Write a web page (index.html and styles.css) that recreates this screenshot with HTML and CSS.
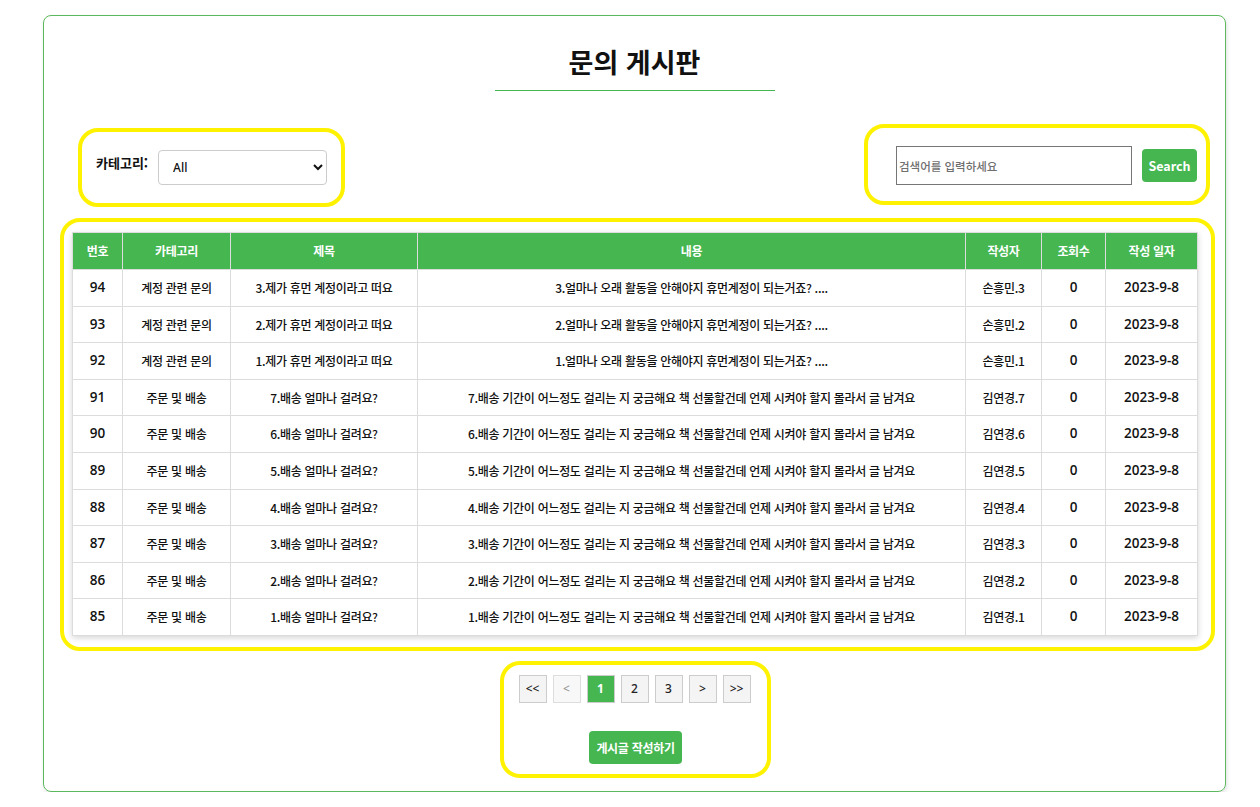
FILE: index.html
```html
<!DOCTYPE html>
<html lang="ko">
<head>
<meta charset="utf-8">
<title>문의 게시판</title>
<link rel="stylesheet" href="styles.css">
</head>
<body>
<div class="board">
  <h1 class="title">문의 게시판</h1>
  <div class="filters">
    <div class="hl category-box">
      <label class="cat-label" for="cat">카테고리:</label>
      <select id="cat" class="cat-select">
        <option>All</option>
      </select>
    </div>
    <div class="hl search-box">
      <input class="search-input" type="text" placeholder="검색어를 입력하세요">
      <button class="btn search-btn">Search</button>
    </div>
  </div>
  <div class="hl table-box">
    <table class="qna">
      <thead>
        <tr>
          <th class="c-no">번호</th>
          <th class="c-cat">카테고리</th>
          <th class="c-title">제목</th>
          <th class="c-body">내용</th>
          <th class="c-author">작성자</th>
          <th class="c-views">조회수</th>
          <th class="c-date">작성 일자</th>
        </tr>
      </thead>
      <tbody>
        <tr><td class="num">94</td><td>계정 관련 문의</td><td>3.제가 휴먼 계정이라고 떠요</td><td>3.얼마나 오래 활동을 안해야지 휴먼계정이 되는거죠? ....</td><td>손흥민.3</td><td class="num">0</td><td class="num">2023-9-8</td></tr>
        <tr><td class="num">93</td><td>계정 관련 문의</td><td>2.제가 휴먼 계정이라고 떠요</td><td>2.얼마나 오래 활동을 안해야지 휴먼계정이 되는거죠? ....</td><td>손흥민.2</td><td class="num">0</td><td class="num">2023-9-8</td></tr>
        <tr><td class="num">92</td><td>계정 관련 문의</td><td>1.제가 휴먼 계정이라고 떠요</td><td>1.얼마나 오래 활동을 안해야지 휴먼계정이 되는거죠? ....</td><td>손흥민.1</td><td class="num">0</td><td class="num">2023-9-8</td></tr>
        <tr><td class="num">91</td><td>주문 및 배송</td><td>7.배송 얼마나 걸려요?</td><td>7.배송 기간이 어느정도 걸리는 지 궁금해요 책 선물할건데 언제 시켜야 할지 몰라서 글 남겨요</td><td>김연경.7</td><td class="num">0</td><td class="num">2023-9-8</td></tr>
        <tr><td class="num">90</td><td>주문 및 배송</td><td>6.배송 얼마나 걸려요?</td><td>6.배송 기간이 어느정도 걸리는 지 궁금해요 책 선물할건데 언제 시켜야 할지 몰라서 글 남겨요</td><td>김연경.6</td><td class="num">0</td><td class="num">2023-9-8</td></tr>
        <tr><td class="num">89</td><td>주문 및 배송</td><td>5.배송 얼마나 걸려요?</td><td>5.배송 기간이 어느정도 걸리는 지 궁금해요 책 선물할건데 언제 시켜야 할지 몰라서 글 남겨요</td><td>김연경.5</td><td class="num">0</td><td class="num">2023-9-8</td></tr>
        <tr><td class="num">88</td><td>주문 및 배송</td><td>4.배송 얼마나 걸려요?</td><td>4.배송 기간이 어느정도 걸리는 지 궁금해요 책 선물할건데 언제 시켜야 할지 몰라서 글 남겨요</td><td>김연경.4</td><td class="num">0</td><td class="num">2023-9-8</td></tr>
        <tr><td class="num">87</td><td>주문 및 배송</td><td>3.배송 얼마나 걸려요?</td><td>3.배송 기간이 어느정도 걸리는 지 궁금해요 책 선물할건데 언제 시켜야 할지 몰라서 글 남겨요</td><td>김연경.3</td><td class="num">0</td><td class="num">2023-9-8</td></tr>
        <tr><td class="num">86</td><td>주문 및 배송</td><td>2.배송 얼마나 걸려요?</td><td>2.배송 기간이 어느정도 걸리는 지 궁금해요 책 선물할건데 언제 시켜야 할지 몰라서 글 남겨요</td><td>김연경.2</td><td class="num">0</td><td class="num">2023-9-8</td></tr>
        <tr><td class="num">85</td><td>주문 및 배송</td><td>1.배송 얼마나 걸려요?</td><td>1.배송 기간이 어느정도 걸리는 지 궁금해요 책 선물할건데 언제 시켜야 할지 몰라서 글 남겨요</td><td>김연경.1</td><td class="num">0</td><td class="num">2023-9-8</td></tr>
      </tbody>
    </table>
  </div>
  <div class="hl pager-box">
    <div class="pager">
      <button class="pg">&lt;&lt;</button>
      <button class="pg disabled">&lt;</button>
      <button class="pg active">1</button>
      <button class="pg">2</button>
      <button class="pg">3</button>
      <button class="pg">&gt;</button>
      <button class="pg">&gt;&gt;</button>
    </div>
    <button class="btn write-btn">게시글 작성하기</button>
  </div>
</div>
</body>
</html>
```

FILE: styles.css
```css
* { box-sizing: border-box; }

html, body {
  margin: 0;
  padding: 0;
  background: #fff;
}

body {
  font-family: "Noto Sans CJK KR", "Noto Sans", sans-serif;
  color: #111;
  padding-top: 15px;
}

.board {
  width: 1183px;
  height: 777px;
  margin-left: 43px;
  border: 1px solid #5cb85c;
  border-radius: 8px;
  box-shadow: 1px 2px 4px rgba(0, 0, 0, 0.12);
  display: flex;
  flex-direction: column;
}

.title {
  width: 280px;
  margin: 29px auto 0;
  padding-bottom: 11px;
  border-bottom: 1px solid #45b650;
  text-align: center;
  font-size: 27px;
  line-height: 34px;
  font-weight: 700;
  color: #111;
}

.hl {
  border: 4px solid #fff200;
  border-radius: 20px;
}

.filters {
  display: flex;
  justify-content: space-between;
  align-items: flex-start;
  padding: 0 15px 0 34px;
  margin-top: 33px;
}

.category-box {
  width: 267px;
  height: 79px;
  margin-top: 4px;
  display: flex;
  align-items: center;
  padding: 0 0 0 14px;
  gap: 10px;
}

.cat-label {
  font-size: 13px;
  font-weight: 700;
  margin-top: -10px;
  white-space: nowrap;
  flex-shrink: 0;
}

.cat-select {
  flex-shrink: 0;
  width: 169px;
  height: 35px;
  border: 1px solid #ccc;
  border-radius: 4px;
  background: #fff;
  padding: 0 8px 0 10px;
  font-family: "Noto Sans", sans-serif;
  font-size: 12px;
  font-weight: 500;
  color: #111;
}

.search-box {
  width: 346px;
  height: 81px;
  display: flex;
  align-items: center;
  padding: 2px 9px 0 28px;
  gap: 10px;
}

.search-input {
  width: 236px;
  height: 39px;
  border: 1px solid #767676;
  border-radius: 0;
  padding: 0 2px;
  font-family: "Noto Sans CJK KR", sans-serif;
  font-size: 11.5px;
}

.search-input::placeholder {
  color: #6f6f6f;
  font-weight: 500;
}

.btn {
  border: none;
  background: #45b650;
  color: #fff;
  font-family: "Noto Sans CJK KR", "Noto Sans", sans-serif;
  font-weight: 700;
  border-radius: 4px;
  cursor: pointer;
}

.search-btn {
  width: 55px;
  height: 33px;
  font-size: 12.5px;
  padding: 0;
}

.table-box {
  margin: 11px 10px 0 16px;
  padding: 10px 13px 11px 8px;
}

.qna {
  width: 1125px;
  border-collapse: collapse;
  box-shadow: 0 2px 6px rgba(0, 0, 0, 0.16);
  font-size: 12px;
  table-layout: fixed;
}

.qna th,
.qna td {
  border: 1px solid #dcdcdc;
  text-align: center;
  padding: 9px 4px;
  line-height: 17.6px;
  white-space: nowrap;
  letter-spacing: -0.3px;
}

.qna th {
  background: #45b650;
  color: #fff;
  font-weight: 700;
  height: 37px;
}

.qna td {
  font-weight: 500;
  color: #111;
}

.qna td.num {
  font-family: "Open Sans", "Noto Sans CJK KR", sans-serif;
  font-size: 13.5px;
  font-weight: 550;
  letter-spacing: 0;
}

.c-no { width: 50px; }
.c-cat { width: 108px; }
.c-title { width: 187px; }
.c-body { width: 548px; }
.c-author { width: 76px; }
.c-views { width: 64px; }
.c-date { width: 92px; }

.pager-box {
  width: 271px;
  height: 117px;
  margin: 10px auto 0;
  position: relative;
  left: 1px;
  display: flex;
  flex-direction: column;
  align-items: center;
  padding-top: 10px;
}

.pager {
  display: flex;
  gap: 6px;
  margin-left: -2px;
}

.pg {
  width: 28px;
  height: 28px;
  border: 1px solid #ccc;
  background: #f4f4f4;
  color: #222;
  font-family: "Noto Sans", sans-serif;
  font-size: 12px;
  font-weight: 500;
  padding: 0;
}

.pg.disabled {
  color: #999;
  background: #f8f8f8;
  border-color: #ddd;
}

.pg.active {
  background: #45b650;
  color: #fff;
  font-weight: 700;
}

.write-btn {
  margin-top: 28px;
  width: 93px;
  height: 33px;
  font-size: 12px;
  padding: 0;
  letter-spacing: -0.3px;
}
```
